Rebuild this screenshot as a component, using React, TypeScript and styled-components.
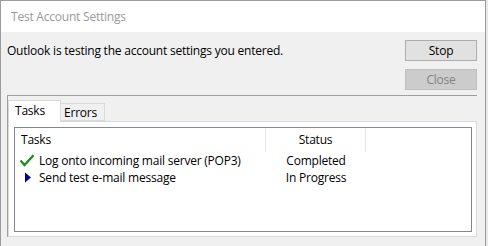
import * as React from "react"
import styled, { createGlobalStyle } from "styled-components"

interface TaskType {
  name: string
  status: string
  state: "done" | "running"
}

const tasks: TaskType[] = [
  { name: "Log onto incoming mail server (POP3)", status: "Completed", state: "done" },
  { name: "Send test e-mail message", status: "In Progress", state: "running" }
]

const GlobalStyle = createGlobalStyle`
  html, body {
    margin: 0;
    padding: 0;
    height: 246px;
    overflow: hidden;
    background: #e9e9e9;
  }
  body {
    font-family: "Open Sans", "Noto Sans", sans-serif;
    font-size: 12px;
    letter-spacing: -0.22px;
    color: #000;
  }
`

const CheckIcon = () => (
  <svg width="16" height="13" viewBox="0 0 16 13">
    <path d="M1.5 6.5 L5.5 11 L14.5 1.2" fill="none" stroke="#1f8a1f" strokeWidth="2.3" />
  </svg>
)

const RunIcon = () => (
  <svg width="16" height="11" viewBox="0 0 16 11">
    <polygon points="6,0.5 12,5.5 6,10.5" fill="#000080" />
  </svg>
)

const App = () => {
  return (
    <React.Fragment>
      <GlobalStyle />
      <Window>
        <TitleBar>Test Account Settings</TitleBar>
        <Body>
          <TopRow>
            <Message>Outlook is testing the account settings you entered.</Message>
            <ButtonColumn>
              <Button>Stop</Button>
              <Button disabled>Close</Button>
            </ButtonColumn>
          </TopRow>
          <Frame>
            <TabStrip>
              <Tab active>Tasks</Tab>
              <Tab>Errors</Tab>
            </TabStrip>
            <TabPanel>
              <ListView>
                <HeaderRow>
                  <HeaderCell align="left">Tasks</HeaderCell>
                  <HeaderCell align="center">Status</HeaderCell>
                  <HeaderCell align="center" last />
                </HeaderRow>
                {tasks.map(task => (
                  <Row key={task.name}>
                    <NameCell>
                      <IconSlot>{task.state === "done" ? <CheckIcon /> : <RunIcon />}</IconSlot>
                      {task.name}
                    </NameCell>
                    <StatusCell>{task.status}</StatusCell>
                  </Row>
                ))}
              </ListView>
            </TabPanel>
          </Frame>
        </Body>
      </Window>
    </React.Fragment>
  )
}

const Window = styled.div`
  width: 486px;
  height: 246px;
  box-sizing: border-box;
  border: 1px solid #9c9c9c;
  border-bottom: none;
  background: #f0f0f0;
  display: flex;
  flex-direction: column;
`

const TitleBar = styled.div`
  height: 31px;
  background: #fff;
  color: #999;
  padding-left: 10px;
  display: flex;
  align-items: center;
  font-size: 12px;
`

const Body = styled.div`
  padding: 8px 8px 0 6px;
  display: flex;
  flex-direction: column;
`

const TopRow = styled.div`
  display: flex;
  justify-content: space-between;
`

const Message = styled.div`
  margin-top: 3px;
  line-height: 16px;
`

const ButtonColumn = styled.div`
  display: flex;
  flex-direction: column;
  gap: 8px;
`

const Button = styled.button`
  width: 72px;
  height: 21px;
  box-sizing: border-box;
  padding: 0;
  font-family: inherit;
  font-size: 12px;
  letter-spacing: inherit;
  color: #000;
  background: #e1e1e1;
  border: 1px solid #adadad;

  &:disabled {
    color: #838383;
    background: #cccccc;
    border-color: #bfbfbf;
  }
`

const Frame = styled.div`
  margin-top: 5px;
  padding-top: 4px;
  border-top: 1px solid #a0a0a0;
  border-left: 1px solid #a0a0a0;
  display: flex;
  flex-direction: column;
`

const TabStrip = styled.div`
  display: flex;
  align-items: flex-end;
  height: 21px;
`

const Tab = styled.div<{ active?: boolean }>`
  box-sizing: border-box;
  height: ${p => (p.active ? "22px" : "18px")};
  width: ${p => (p.active ? "53px" : "44px")};
  margin-bottom: ${p => (p.active ? "-1px" : "0")};
  position: relative;
  z-index: ${p => (p.active ? 1 : 0)};
  background: ${p => (p.active ? "#fff" : "#f0f0f0")};
  border: 1px solid #d9d9d9;
  border-bottom: ${p => (p.active ? "none" : "1px solid #d9d9d9")};
  border-left: ${p => (p.active ? "1px solid #d9d9d9" : "none")};
  display: flex;
  align-items: center;
  padding-left: ${p => (p.active ? "6px" : "3px")};
  padding-bottom: ${p => (p.active ? "2px" : "0")};
`

const TabPanel = styled.div`
  height: 116px;
  box-sizing: border-box;
  background: #fff;
  border: 1px solid #d9d9d9;
  padding: 5px 4px 4px 5px;
`

const ListView = styled.div`
  height: 105px;
  box-sizing: border-box;
  border: 1px solid #828790;
  background: #fff;
`

const HeaderRow = styled.div`
  display: grid;
  grid-template-columns: 251px 100px 1fr;
  height: 24px;
`

const HeaderCell = styled.div<{ align: "left" | "center"; last?: boolean }>`
  display: flex;
  align-items: center;
  justify-content: ${p => (p.align === "left" ? "flex-start" : "center")};
  padding-left: ${p => (p.align === "left" ? "6px" : "0")};
  border-right: ${p => (p.last ? "none" : "1px solid #e5e5e5")};
  padding-bottom: 1px;
`

const Row = styled.div`
  display: grid;
  grid-template-columns: 251px 100px 1fr;
  height: 17px;
  align-items: center;
`

const NameCell = styled.div`
  display: flex;
  align-items: center;
  gap: 4px;
  padding-left: 4px;
  white-space: nowrap;
`

const IconSlot = styled.span`
  width: 16px;
  display: flex;
  justify-content: center;
`

const StatusCell = styled.div`
  text-align: center;
`

export default App
